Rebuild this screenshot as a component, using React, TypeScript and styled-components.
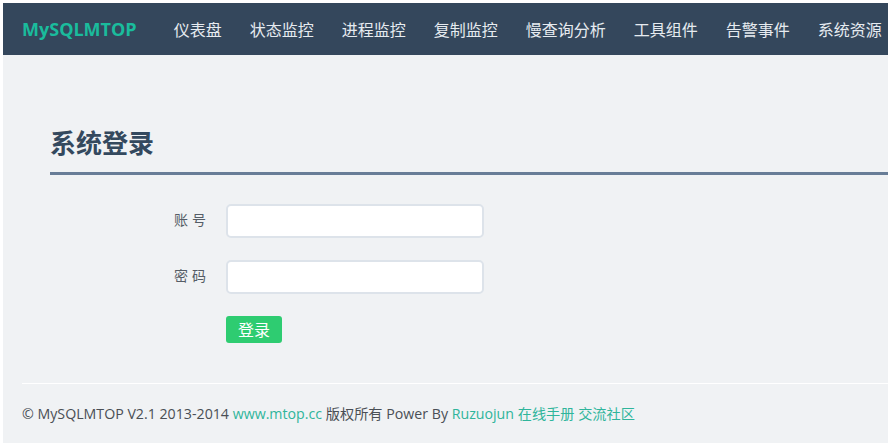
import React from "react";
import styled, { createGlobalStyle } from "styled-components";

const Global = createGlobalStyle`
  html, body { margin: 0; padding: 0; background: #ffffff; }
  body { font-family: "Open Sans", "Noto Sans CJK SC", sans-serif; }
  * { box-sizing: border-box; }
`;

const Frame = styled.div`
  width: 896px;
  height: 447px;
  padding: 3px 8px 4px 3px;
  background: #ffffff;
`;

const Page = styled.div`
  width: 885px;
  height: 440px;
  background: #f0f2f4;
  display: flex;
  flex-direction: column;
  overflow: hidden;
`;

const NavBar = styled.nav`
  height: 52px;
  background: #34475c;
  display: flex;
  align-items: center;
  padding-left: 19px;
  flex-shrink: 0;
`;

const Brand = styled.a`
  font-family: "Open Sans", "Noto Sans CJK SC", sans-serif;
  font-weight: 700;
  font-size: 18px;
  color: #1abc9c;
  margin-right: 23px;
`;

const NavItem = styled.a`
  font-family: "Noto Sans CJK SC", sans-serif;
  font-size: 16px;
  color: #e6ebf0;
  padding: 0 14px;
  white-space: nowrap;
`;

const Main = styled.div`
  padding: 70px 0 0 47px;
  flex: 1;
`;

const Title = styled.h2`
  margin: 0;
  font-family: "Noto Sans CJK SC", sans-serif;
  font-weight: 700;
  font-size: 26px;
  line-height: 34px;
  color: #34495e;
  padding-bottom: 13px;
  border-bottom: 3px solid #687d97;
`;

const Form = styled.form`
  display: flex;
  flex-direction: column;
  padding: 29px 0 0 122px;
  gap: 22px;
`;

const Row = styled.div`
  display: flex;
  align-items: center;
`;

const Label = styled.label`
  width: 54px;
  margin-bottom: 5px;
  font-family: "Noto Sans CJK SC", sans-serif;
  font-size: 14px;
  letter-spacing: 4px;
  color: #555d66;
  text-align: right;
  padding-right: 16px;
`;

const Input = styled.input`
  width: 258px;
  height: 34px;
  border: 2px solid #dde3ea;
  border-radius: 5px;
  background: #ffffff;
  outline: none;
`;

const Submit = styled.button`
  margin-left: 54px;
  width: 56px;
  height: 27px;
  border: none;
  border-radius: 3px;
  background: #2ecc71;
  color: #ffffff;
  font-family: "Noto Sans CJK SC", sans-serif;
  font-size: 16px;
  padding: 0;
  line-height: 27px;
`;

const Footer = styled.footer`
  margin-left: 19px;
  border-top: 1px solid #ffffff;
  height: 60px;
  display: flex;
  align-items: center;
  padding-bottom: 2px;
  flex-shrink: 0;
`;

const FooterText = styled.p`
  margin: 0;
  font-family: "Open Sans", "Noto Sans CJK SC", sans-serif;
  font-size: 14.2px;
  color: #4a4f55;
  white-space: nowrap;
`;

const Link = styled.a`
  color: #2fb59b;
`;

export default function App() {
  const items = ["仪表盘", "状态监控", "进程监控", "复制监控", "慢查询分析", "工具组件", "告警事件", "系统资源"];
  return (
    <>
      <Global />
      <Frame>
        <Page>
          <NavBar>
            <Brand>MySQLMTOP</Brand>
            {items.map((t) => (
              <NavItem key={t}>{t}</NavItem>
            ))}
          </NavBar>
          <Main>
            <Title>系统登录</Title>
            <Form onSubmit={(e) => e.preventDefault()}>
              <Row>
                <Label>账号</Label>
                <Input type="text" />
              </Row>
              <Row>
                <Label>密码</Label>
                <Input type="password" />
              </Row>
              <Row>
                <Submit type="submit">登录</Submit>
              </Row>
            </Form>
          </Main>
          <Footer>
            <FooterText>
              © MySQLMTOP V2.1 2013-2014 <Link>www.mtop.cc</Link> 版权所有 Power By <Link>Ruzuojun</Link>{" "}
              <Link>在线手册</Link> <Link>交流社区</Link>
            </FooterText>
          </Footer>
        </Page>
      </Frame>
    </>
  );
}
